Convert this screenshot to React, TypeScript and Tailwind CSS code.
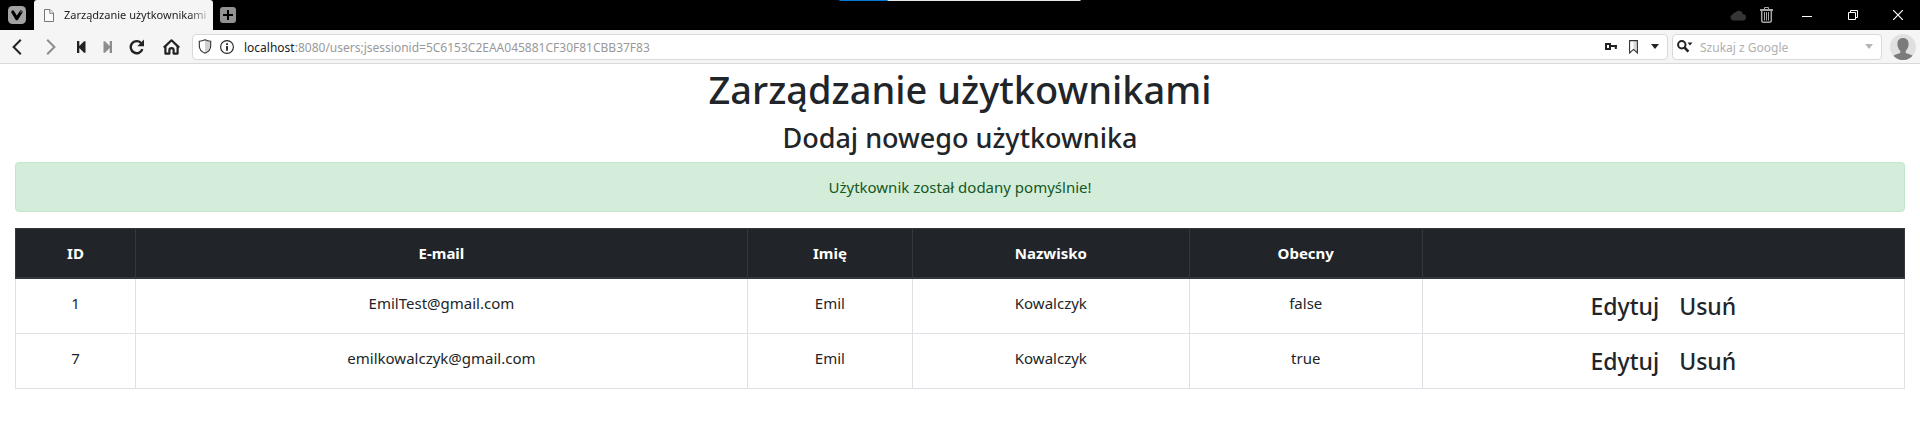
import type { ReactNode } from "react";

const users = [
  { id: 1, email: "EmilTest@gmail.com", firstName: "Emil", lastName: "Kowalczyk", present: "false" },
  { id: 7, email: "emilkowalczyk@gmail.com", firstName: "Emil", lastName: "Kowalczyk", present: "true" },
];

const columns = [
  { title: "ID", width: "w-[6.35%]" },
  { title: "E-mail", width: "w-[32.4%]" },
  { title: "Imię", width: "w-[8.73%]" },
  { title: "Nazwisko", width: "w-[14.66%]" },
  { title: "Obecny", width: "w-[12.33%]" },
  { title: "", width: "w-[25.53%]" },
];

function IconButton({ label, size, children }: { label: string; size: string; children: ReactNode }) {
  return (
    <button type="button" aria-label={label} className={`flex shrink-0 items-center justify-center ${size}`}>
      {children}
    </button>
  );
}

function TitleBar() {
  return (
    <div className="relative flex h-[30px] items-center bg-black">
      <div className="absolute top-0 left-1/2 flex h-px w-[241px] -translate-x-1/2">
        <div className="w-12 bg-[#0078d7]" />
        <div className="flex-1 bg-[#e6e6e6]" />
      </div>
      <IconButton label="Vivaldi" size="h-full w-[34px]">
        <svg width="18" height="18" viewBox="0 0 18 18">
          <rect width="18" height="18" rx="4.5" fill="#a3a3a3" />
          <path d="M4.8 6 L8.8 12.6 L13 6" fill="none" stroke="#000" strokeWidth="3.2" strokeLinecap="round" strokeLinejoin="round" />
          <circle cx="13" cy="5.8" r="1" fill="#555" />
        </svg>
      </IconButton>
      <div className="flex h-full w-[179px] items-center gap-[10px] rounded-t-[3px] bg-[#f5f5f5] pl-[10px]">
        <svg className="shrink-0" width="10" height="13" viewBox="0 0 10 13" fill="#fbfbfb" stroke="#777">
          <path d="M.5 .5 H6 L9.5 4 V12.5 H.5 Z" />
          <path d="M5.8 .8 V4.3 H9.3" />
        </svg>
        <span className="text-[11px] leading-4 whitespace-nowrap text-[#222] [mask-image:linear-gradient(to_right,#000_125px,transparent_148px)]">
          Zarządzanie użytkownikami
        </span>
      </div>
      <IconButton label="Nowa karta" size="h-full w-[30px]">
        <svg width="16" height="16" viewBox="0 0 16 16">
          <rect width="16" height="16" rx="3" fill="#939393" />
          <path d="M8 3 V13 M3 8 H13" stroke="#000" strokeWidth="2" />
        </svg>
      </IconButton>
      <div className="mr-1 ml-auto flex">
        <IconButton label="Synchronizacja" size="h-[30px] w-7">
          <svg width="16" height="11" viewBox="0 0 16 11" fill="#363636">
            <path d="M3.5 10.5 A3.2 3.2 0 0 1 3 4.2 A2 2 0 0 1 5.5 2.6 A4 4 0 0 1 12.9 4.3 A3.1 3.1 0 0 1 12.7 10.5 Z" />
          </svg>
        </IconButton>
        <IconButton label="Kosz" size="h-[30px] w-7">
          <svg width="13" height="16" viewBox="0 0 13 16" fill="none" stroke="#a6a6a6">
            <path d="M0 3 H13" strokeWidth="2" />
            <path d="M4.5 2 V.5 H8.5 V2" />
            <path d="M1.7 4 V13.2 Q1.7 15.2 3.7 15.2 H9.3 Q11.3 15.2 11.3 13.2 V4" strokeWidth="1.5" />
            <path d="M4.5 5 V13.5 M6.5 5 V13.5 M8.5 5 V13.5" />
          </svg>
        </IconButton>
      </div>
      <IconButton label="Minimalizuj" size="h-full w-[46px]">
        <svg width="10" height="10" viewBox="0 0 10 10" stroke="#fff">
          <path d="M0 6.5 H10" />
        </svg>
      </IconButton>
      <IconButton label="Przywróć" size="h-full w-[46px]">
        <svg width="10" height="10" viewBox="0 0 10 10" fill="none" stroke="#fff">
          <path d="M.5 2.5 H7.5 V9.5 H.5 Z M2.5 2.5 V.5 H9.5 V7.5 H7.5" />
        </svg>
      </IconButton>
      <IconButton label="Zamknij" size="h-full w-11">
        <svg width="10" height="10" viewBox="0 0 10 10" stroke="#fff" strokeWidth="1.2">
          <path d="M0 0 L10 10 M10 0 L0 10" />
        </svg>
      </IconButton>
    </div>
  );
}

function ToolBar() {
  return (
    <div className="flex h-[34px] items-center border-b border-[#d9d9d9] bg-[#f5f5f5]">
      <IconButton label="Wstecz" size="h-full w-[34px]">
        <svg width="10" height="16" viewBox="0 0 10 16" fill="none" stroke="#222" strokeWidth="2">
          <path d="M8.8 .8 L1.6 8 L8.8 15.2" />
        </svg>
      </IconButton>
      <IconButton label="Dalej" size="h-full w-[34px]">
        <svg width="10" height="16" viewBox="0 0 10 16" fill="none" stroke="#8d8d8d" strokeWidth="2">
          <path d="M1.2 .8 L8.4 8 L1.2 15.2" />
        </svg>
      </IconButton>
      <IconButton label="Przewiń wstecz" size="h-full w-[26px]">
        <svg width="9" height="12" viewBox="0 0 9 12" fill="#222">
          <path d="M0 0 H2.3 V5 L7 .2 H8.5 V11.8 H7 L2.3 7 V12 H0 Z" />
        </svg>
      </IconButton>
      <IconButton label="Przewiń do przodu" size="h-full w-[26px]">
        <svg width="9" height="12" viewBox="0 0 9 12" fill="#8d8d8d">
          <path d="M9 0 H6.7 V5 L2 .2 H.5 V11.8 H2 L6.7 7 V12 H9 Z" />
        </svg>
      </IconButton>
      <IconButton label="Odśwież" size="h-full w-[34px]">
        <svg width="16" height="16" viewBox="0 0 16 16">
          <path d="M13.4 10.2 A6 6 0 1 1 12 3.9" fill="none" stroke="#222" strokeWidth="2.4" />
          <path d="M15 .6 V7.2 H8.4 Z" fill="#222" />
        </svg>
      </IconButton>
      <IconButton label="Strona startowa" size="h-full w-[34px]">
        <svg width="17" height="16" viewBox="0 0 17 16" fill="none" stroke="#222" strokeWidth="2.2" strokeLinejoin="round">
          <path d="M.8 8.6 L8.5 1.3 L16.2 8.6" />
          <path d="M2.4 7.6 V14.6 H6.4 V11 Q6.4 9.2 8.5 9.2 Q10.6 9.2 10.6 11 V14.6 H14.6 V7.6" />
        </svg>
      </IconButton>

      <div className="ml-1 flex h-[26px] min-w-0 flex-1 items-center rounded border border-[#d9d9d9] bg-white pr-[3px] pl-[5px]">
        <svg className="shrink-0" width="14" height="15" viewBox="0 0 14 15">
          <path d="M7 1.5 L12 2.6 V7 Q12 11.5 7 13.8 Z" fill="#d0d0d0" />
          <path d="M7 .8 Q9.5 2.2 12.7 2.2 V7 Q12.7 11.8 7 14.2 Q1.3 11.8 1.3 7 V2.2 Q4.5 2.2 7 .8 Z" fill="none" stroke="#333" strokeWidth="1.1" />
        </svg>
        <svg className="ml-2 shrink-0" width="14" height="14" viewBox="0 0 14 14">
          <circle cx="7" cy="7" r="6.4" fill="none" stroke="#222" strokeWidth="1.1" />
          <path d="M7 6 V10.8 M7 3.2 V5" stroke="#222" strokeWidth="1.8" />
        </svg>
        <label className="ml-[10px] flex min-w-0 flex-1 items-center pt-0.5 text-[12px] leading-5">
          <span className="text-[#222]">localhost</span>
          <input
            type="text"
            aria-label="Adres"
            defaultValue=":8080/users;jsessionid=5C6153C2EAA045881CF30F81CBB37F83"
            className="min-w-0 flex-1 bg-transparent text-[#999] outline-none"
          />
        </label>
        <div className="flex gap-1">
          <IconButton label="Hasła" size="h-6 w-[18px]">
            <svg width="12" height="7" viewBox="0 0 12 7" fill="none" stroke="#222" strokeWidth="2">
              <path d="M1 1 H5 V6 H1 Z M5 3 H12 M10.8 3 V6" />
            </svg>
          </IconButton>
          <IconButton label="Zakładka" size="h-6 w-[18px]">
            <svg width="9" height="14" viewBox="0 0 9 14">
              <path d="M4.5 1 H8 V12.5 L4.5 9.5 Z" fill="#d8d8d8" />
              <path d="M.6 .6 H8.4 V13 L4.5 9.4 L.6 13 Z" fill="none" stroke="#333" strokeWidth="1.1" />
            </svg>
          </IconButton>
          <IconButton label="Historia adresów" size="h-6 w-[18px]">
            <svg width="8" height="5" viewBox="0 0 8 5" fill="#222">
              <path d="M0 0 H8 L4 5 Z" />
            </svg>
          </IconButton>
        </div>
      </div>

      <div className="ml-1 flex h-[26px] w-[210px] items-center rounded border border-[#d9d9d9] bg-white pr-2 pl-1">
        <svg className="shrink-0" width="16" height="13" viewBox="0 0 16 13">
          <circle cx="4.8" cy="4.8" r="3.7" fill="none" stroke="#222" strokeWidth="2" />
          <path d="M7.6 7.6 L11.4 11.6" stroke="#222" strokeWidth="2.6" />
          <path d="M10.5 2.6 H15.5 L13 5.4 Z" fill="#222" />
        </svg>
        <input
          type="text"
          aria-label="Szukaj z Google"
          placeholder="Szukaj z Google"
          className="ml-[7px] min-w-0 flex-1 bg-transparent pt-0.5 text-[12px] leading-5 outline-none placeholder:text-[#b0b0b0]"
        />
        <svg className="shrink-0" width="8" height="5" viewBox="0 0 8 5" fill="#b5b5b5">
          <path d="M0 0 H8 L4 5 Z" />
        </svg>
      </div>

      <IconButton label="Profil" size="mx-1 pl-1 h-[26px] w-[30px]">
        <svg width="26" height="26" viewBox="0 0 26 26">
          <circle cx="13" cy="13" r="13" fill="#e0e0e0" />
          <path
            d="M13 4 C16.6 4 18.6 6.4 18.6 10 C18.6 13 17.2 15.6 15.6 17 V18.6 C16.2 20 20.4 20.2 22.6 21.8 A13 13 0 0 1 3.4 21.8 C5.6 20.2 9.8 20 10.4 18.6 V17 C8.8 15.6 7.4 13 7.4 10 C7.4 6.4 9.4 4 13 4 Z"
            fill="#7b7b7b"
          />
        </svg>
      </IconButton>
    </div>
  );
}

export default function App() {
  return (
    <div className="bg-white font-['Noto_Sans',sans-serif] text-[15px] leading-6 text-[#212529]">
      <header>
        <TitleBar />
        <ToolBar />
      </header>
      <main className="px-[15px] pt-px text-center">
        <h1 className="mb-2 text-[38px] leading-[48px] font-medium">Zarządzanie użytkownikami</h1>
        <h2 className="mb-[7px] text-[27px] leading-[34px] font-medium">
          <a href="#new">Dodaj nowego użytkownika</a>
        </h2>
        <div role="status" className="mb-4 rounded border border-[#c3e6cb] bg-[#d4edda] p-3 text-[#155724]">
          Użytkownik został dodany pomyślnie!
        </div>
        <table className="w-full table-fixed border-collapse border border-[#dee2e6]">
          <thead className="bg-[#212529] text-white">
            <tr>
              {columns.map((column) => (
                <th
                  key={column.title}
                  scope="col"
                  className={`border border-b-2 border-[#32383e] p-3 font-bold ${column.width}`}
                >
                  {column.title}
                </th>
              ))}
            </tr>
          </thead>
          <tbody>
            {users.map((user) => (
              <tr key={user.id} className="h-[55px] align-top">
                <td className="border border-[#dee2e6] px-3 pt-3">{user.id}</td>
                <td className="border border-[#dee2e6] px-3 pt-3">{user.email}</td>
                <td className="border border-[#dee2e6] px-3 pt-3">{user.firstName}</td>
                <td className="border border-[#dee2e6] px-3 pt-3">{user.lastName}</td>
                <td className="border border-[#dee2e6] px-3 pt-3">{user.present}</td>
                <td className="border border-[#dee2e6] px-3 pt-3">
                  <div className="flex justify-center gap-5 text-[23px] leading-[30px] font-medium">
                    <a href="#edit">Edytuj</a>
                    <a href="#delete">Usuń</a>
                  </div>
                </td>
              </tr>
            ))}
          </tbody>
        </table>
      </main>
    </div>
  );
}
